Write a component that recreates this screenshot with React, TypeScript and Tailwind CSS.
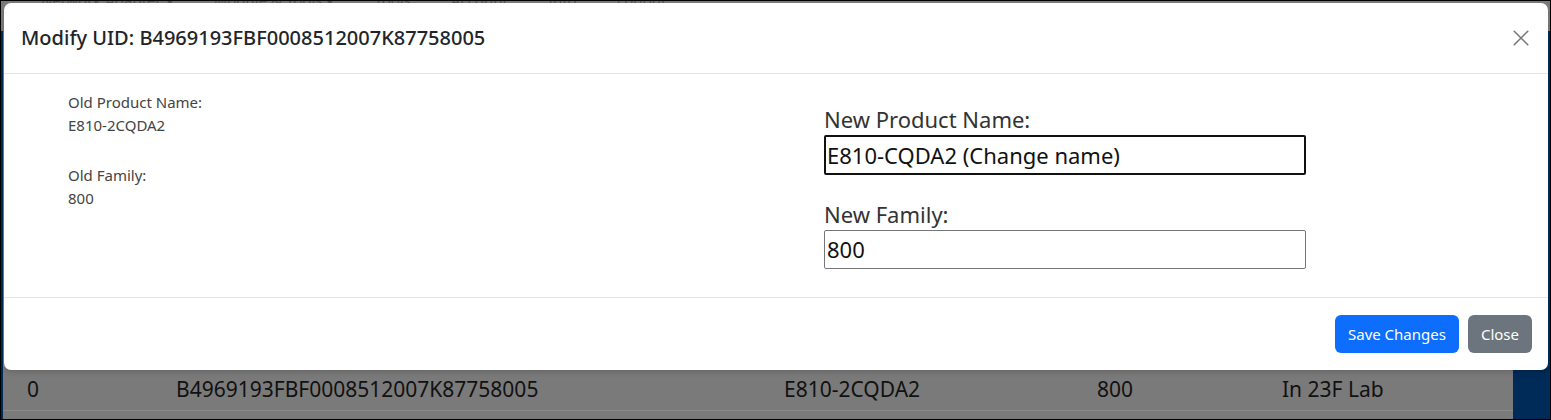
import React from "react";

const font = { fontFamily: '"Noto Sans", "Open Sans", Arial, sans-serif' };

function CloseIcon() {
  return (
    <svg width="18" height="18" viewBox="0 0 16 16" fill="none" stroke="#777" strokeWidth="1.4" strokeLinecap="round">
      <path d="M2 2l12 12M14 2L2 14" />
    </svg>
  );
}

export default function App() {
  return (
    <div
      className="relative h-[420px] w-[1551px] overflow-hidden border border-black bg-[#7a7a7a] text-[#222]"
      style={font}
    >
      {/* page behind the backdrop */}
      <div className="flex h-[30px] items-start gap-10 pl-[40px] text-[15px] leading-none text-[#555]">
        <span className="-mt-[8px]">Network Adapter ▾</span>
        <span className="-mt-[8px]">Module &amp; Tools ▾</span>
        <span className="-mt-[8px]">Tools</span>
        <span className="-mt-[8px]">Account</span>
        <span className="-mt-[8px]">Info</span>
        <span className="-mt-[8px]">Logout</span>
      </div>
      <div className="flex h-[388px]">
        <div className="w-[2px] shrink-0 bg-[#002a57]" />
        <div className="flex flex-1 flex-col">
          <div className="h-[338px]" />
          <div className="flex h-[42px] items-center border-b border-[#8a8a8a] text-[21px] text-[#111]">
            <span className="w-[173px] shrink-0 pl-[24px]">0</span>
            <span className="w-[608px] shrink-0">B4969193FBF0008512007K87758005</span>
            <span className="w-[313px] shrink-0">E810-2CQDA2</span>
            <span className="w-[185px] shrink-0">800</span>
            <span>In 23F Lab</span>
          </div>
        </div>
        <div className="w-[37px] shrink-0 bg-[#002a57]" />
      </div>

      {/* modal */}
      <div className="absolute left-[3px] top-[2px] flex h-[367px] w-[1544px] flex-col rounded-[7px] bg-white shadow-md">
        <div className="flex h-[71px] items-center justify-between border-b border-[#e5e5e5] pl-[17px] pr-[18px]">
          <h2 className="text-[20px] font-medium text-[#212529]">Modify UID: B4969193FBF0008512007K87758005</h2>
          <CloseIcon />
        </div>
        <div className="grid h-[224px] grid-cols-[756px_1fr] border-b border-[#e5e5e5] pl-[64px]">
          <div className="pt-[17px] text-[15px] leading-[23px] text-[#444]">
            <div>Old Product Name:</div>
            <div>E810-2CQDA2</div>
            <div className="mt-[27px]">Old Family:</div>
            <div>800</div>
          </div>
          <div className="pt-[30px] text-[22px] text-[#333]">
            <div className="leading-[30px]">New Product Name:</div>
            <div className="mt-[1px] flex h-[40px] w-[482px] items-center rounded-[2px] border-2 border-[#111] pl-[1px] text-[#111]">
              E810-CQDA2 (Change name)
            </div>
            <div className="mt-[24px] leading-[30px]">New Family:</div>
            <div className="mt-[1px] flex h-[39px] w-[482px] items-center rounded-[2px] border border-[#767676] pl-[2px] text-[#111]">
              800
            </div>
          </div>
        </div>
        <div className="flex flex-1 items-center justify-end gap-[9px] pr-[16px]">
          <button className="h-[38px] rounded-[6px] bg-[#0d6efd] px-[13px] text-[15px] text-white">Save Changes</button>
          <button className="h-[38px] rounded-[6px] bg-[#6c757d] px-[13px] text-[15px] text-white">Close</button>
        </div>
      </div>
    </div>
  );
}
